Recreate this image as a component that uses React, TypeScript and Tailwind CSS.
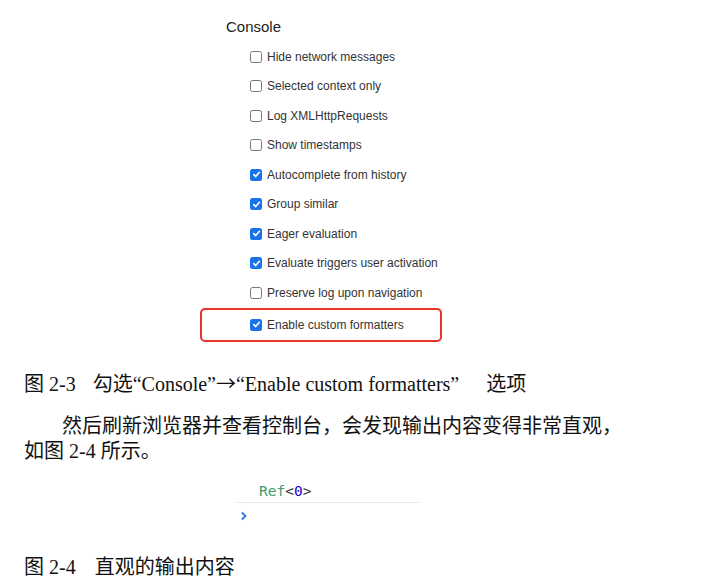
const options = [
  { label: "Hide network messages", checked: false },
  { label: "Selected context only", checked: false },
  { label: "Log XMLHttpRequests", checked: false },
  { label: "Show timestamps", checked: false },
  { label: "Autocomplete from history", checked: true },
  { label: "Group similar", checked: true },
  { label: "Eager evaluation", checked: true },
  { label: "Evaluate triggers user activation", checked: true },
  { label: "Preserve log upon navigation", checked: false },
];

const Box = ({ checked }: { checked: boolean }) =>
  checked ? (
    <span className="flex h-[12px] w-[12px] items-center justify-center rounded-[2.5px] bg-[#1a73e8]">
      <svg width="9" height="9" viewBox="0 0 10 10" fill="none">
        <path d="M2 5.2 L4.1 7.3 L8.2 2.6" stroke="white" strokeWidth="1.8" strokeLinecap="round" strokeLinejoin="round" />
      </svg>
    </span>
  ) : (
    <span className="block h-[12px] w-[12px] rounded-[2.5px] border border-[#767676] bg-white" />
  );

const Row = ({ label, checked }: { label: string; checked: boolean }) => (
  <div className="flex h-[29.5px] items-center">
    <Box checked={checked} />
    <span className="ml-[5px] text-[12px] text-[#333]">{label}</span>
  </div>
);

const cn = "font-['Liberation_Serif','Noto_Sans_CJK_SC',serif] text-[20px] text-[#111]";
const arrow = "font-['Noto_Sans_CJK_SC',sans-serif]";

export default function App() {
  return (
    <div className="h-[580px] w-[711px] overflow-hidden bg-white">
      <div className="pl-[226px] pt-[17px] font-['Liberation_Sans',Arial,sans-serif]">
        <div className="h-[20px] text-[15px] leading-[20px] text-[#222]">Console</div>
        <div className="mt-[5px] pl-[24px]">
          {options.map((o) => (
            <Row key={o.label} label={o.label} checked={o.checked} />
          ))}
          <div className="ml-[-50px] flex h-[34px] w-[242px] items-center rounded-[5px] border-2 border-[#e8322d] pl-[48px]">
            <Box checked />
            <span className="ml-[5px] text-[12px] text-[#333]">Enable custom formatters</span>
          </div>
        </div>
      </div>

      <div className={`mt-[29px] flex h-[26px] items-center pl-[24px] ${cn}`}>
        <span>图 2-3</span>
        <span className="ml-[17px]">
          勾选“Console”<span className={arrow}>→</span>“Enable custom formatters”
        </span>
        <span className="ml-[27px]">选项</span>
      </div>

      <div className={`mt-[17px] pl-[24px] pr-[60px] leading-[25px] ${cn}`}>
        <p className="indent-[38px]">然后刷新浏览器并查看控制台，会发现输出内容变得非常直观，</p>
        <p>如图 2-4 所示。</p>
      </div>

      <div className="ml-[235px] mt-[16px] w-[185px] font-['DejaVu_Sans_Mono',monospace] text-[14.5px]">
        <div className="h-[22px] pl-[24px] leading-[22px]">
          <span className="text-[#3d9d6c]">Ref</span>
          <span className="text-[#333]">&lt;</span>
          <span className="text-[#1c00cf]">0</span>
          <span className="text-[#333]">&gt;</span>
        </div>
        <div className="h-px bg-[#ebebeb]" />
        <div className="flex h-[26px] items-center pl-[5px]">
          <svg width="8" height="10" viewBox="0 0 8 10" fill="none">
            <path d="M1.8 1.5 L5.5 5 L1.8 8.5" stroke="#3b7bd8" strokeWidth="1.9" />
          </svg>
        </div>
      </div>

      <div className={`mt-[25px] flex h-[26px] items-center pl-[24px] ${cn}`}>
        <span>图 2-4</span>
        <span className="ml-[19px]">直观的输出内容</span>
      </div>
    </div>
  );
}
